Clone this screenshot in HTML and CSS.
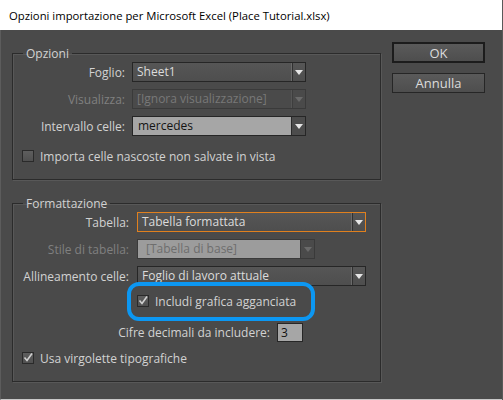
FILE: index.html
```
<!DOCTYPE html>
<html lang="it">
<head>
<meta charset="utf-8">
<title>Opzioni importazione</title>
<link rel="stylesheet" href="styles.css">
</head>
<body>
<div class="window">
  <div class="titlebar">Opzioni importazione per Microsoft Excel (Place Tutorial.xlsx)</div>
  <div class="client">
    <div class="groups">
      <fieldset class="group g1">
        <legend>Opzioni</legend>
        <div class="row r-first">
          <span class="lbl">Foglio:</span>
          <div class="select w-foglio"><span class="val">Sheet1</span><span class="btn"><span class="tri"></span></span></div>
        </div>
        <div class="row r-next">
          <span class="lbl dis">Visualizza:</span>
          <div class="select w-foglio disabled"><span class="val">[Ignora visualizzazione]</span><span class="btn"><span class="tri"></span></span></div>
        </div>
        <div class="row r-next">
          <span class="lbl">Intervallo celle:</span>
          <div class="select w-foglio field"><span class="val">mercedes</span><span class="btn plain"><span class="tri"></span></span></div>
        </div>
        <div class="row r-check1">
          <span class="cb"></span>
          <span class="cbtext">Importa celle nascoste non salvate in vista</span>
        </div>
      </fieldset>

      <fieldset class="group g2">
        <legend>Formattazione</legend>
        <div class="row r-first">
          <span class="lbl">Tabella:</span>
          <div class="select w-tab focused"><span class="val">Tabella formattata</span><span class="btn"><span class="tri"></span></span></div>
        </div>
        <div class="row r-next">
          <span class="lbl dis">Stile di tabella:</span>
          <div class="select w-stile disfield"><span class="val">[Tabella di base]</span><span class="btn plain"><span class="tri"></span></span></div>
        </div>
        <div class="row r-next">
          <span class="lbl">Allineamento celle:</span>
          <div class="select w-tab"><span class="val">Foglio di lavoro attuale</span><span class="btn"><span class="tri"></span></span></div>
        </div>
        <div class="row r-incl">
          <span class="cb checked"><svg viewBox="0 0 12 12" width="12" height="12"><path d="M2.5 5.5 L5 8.5 L10 1.5" fill="none" stroke="#d0d0d0" stroke-width="1.6"/></svg></span>
          <span class="cbtext">Includi grafica agganciata</span>
          <span class="highlight"></span>
        </div>
        <div class="row r-cifre">
          <span class="lbl-cifre">Cifre decimali da includere:</span>
          <span class="numfield">3</span>
        </div>
        <div class="row r-usa">
          <span class="cb checked"><svg viewBox="0 0 12 12" width="12" height="12"><path d="M2.5 5.5 L5 8.5 L10 1.5" fill="none" stroke="#d0d0d0" stroke-width="1.6"/></svg></span>
          <span class="cbtext">Usa virgolette tipografiche</span>
        </div>
      </fieldset>
    </div>
    <div class="buttons">
      <div class="button default">OK</div>
      <div class="button">Annulla</div>
    </div>
  </div>
</div>
</body>
</html>
```

FILE: styles.css
```
* { box-sizing: border-box; }
html, body { margin: 0; padding: 0; }
body {
  width: 503px;
  height: 400px;
  overflow: hidden;
  background: #d8d8d8;
  font-family: "Open Sans", "Noto Sans", "DejaVu Sans", sans-serif;
  font-size: 12px;
  color: #d2d2d2;
}
.window {
  width: 503px;
  height: 400px;
  display: flex;
  flex-direction: column;
  border-right: 1px solid #595959;
}
.titlebar {
  height: 30px;
  flex: none;
  background: #ffffff;
  color: #000;
  padding-left: 9px;
  padding-top: 1px;
  display: flex;
  align-items: center;
  white-space: nowrap;
  font-size: 11.3px;
}
.client {
  flex: 1;
  background: #4a4a4a;
  border-left: 1px solid #5c5c5c;
  border-bottom: 1px solid #c8c8c8;
  display: flex;
  align-items: flex-start;
  padding: 16px 0 0 11px;
}
.groups {
  width: 369px;
  display: flex;
  flex-direction: column;
}
.group {
  margin: 0;
  padding: 0;
  min-width: 0;
  border: 1px solid #2b2b2b;
  box-shadow: 1px 1px 0 #585858, inset 1px 1px 0 #585858;
}
.group legend {
  margin-left: 10px;
  padding: 0 3px;
  line-height: 15px;
  height: 15px;
  color: #d2d2d2;
}
.g1 { height: 134px; margin-bottom: 16px; }
.g2 { height: 186px; }
.row {
  display: flex;
  align-items: center;
  height: 20px;
  white-space: nowrap;
}
.r-first { margin-top: 1px; }
.r-next { margin-top: 7px; }
.r-check1 { margin-top: 10px; padding-left: 9px; }
.r-incl { margin-top: 5px; padding-left: 124px; position: relative; }
.r-cifre { margin-top: 11px; }
.r-usa { margin-top: 6px; padding-left: 9px; }

.g1 .lbl { width: 112px; margin-right: 7px; text-align: right; }
.g2 .lbl { width: 116px; margin-right: 8px; text-align: right; }
.lbl.dis { color: #808080; }

.select {
  height: 20px;
  display: flex;
  border: 1px solid #262626;
  background: linear-gradient(#565656, #4e4e4e);
  color: #dcdcdc;
}
.w-foglio { width: 174px; }
.w-tab { width: 229px; }
.w-stile { width: 178px; }
.select .val {
  flex: 1;
  padding-left: 4px;
  line-height: 18px;
  overflow: hidden;
}
.select .btn {
  width: 14px;
  flex: none;
  display: flex;
  align-items: center;
  justify-content: center;
  border-left: 1px solid #6a6a6a;
  box-shadow: inset 1px 0 0 #303030;
  padding-left: 1px;
}
.select .btn.plain {
  border-left: 1px solid #2a2a2a;
  box-shadow: none;
  background: #4c4c4c;
  padding-left: 0;
}
.tri {
  width: 0;
  height: 0;
  border-left: 4px solid transparent;
  border-right: 4px solid transparent;
  border-top: 5px solid #e6e6e6;
}
.select.focused { border-color: #e0801e; }
.select.disabled { border-color: #3a3a3a; background: #4a4a4a; color: #787878; }
.select.disabled .btn { border-left-color: #555; box-shadow: inset 1px 0 0 #3e3e3e; }
.select.disabled .tri { border-top-color: #6a6a6a; }
.select.field .val { background: #a6a6a6; color: #141414; padding-left: 5px; }
.select.disfield { border-color: #3a3a3a; }
.select.disfield .val { background: #9c9c9c; color: #6e6e6e; padding-left: 8px; }
.select.disfield .btn { border-left-color: #3a3a3a; background: #4a4a4a; }
.select.disfield .tri { border-top-color: #6a6a6a; }

.cb {
  width: 12px;
  height: 12px;
  flex: none;
  border: 1px solid #2a2a2a;
  background: linear-gradient(#5e5e5e, #505050);
  margin-right: 6px;
  display: flex;
  align-items: center;
  justify-content: center;
}
.cb svg { display: block; flex: none; }
.cbtext { color: #d2d2d2; }

.highlight {
  position: absolute;
  left: 114px;
  top: -9px;
  width: 188px;
  height: 39px;
  border: 4px solid #0c97f2;
  border-radius: 12px;
}

.lbl-cifre { width: 257px; text-align: right; margin-right: 7px; }
.numfield {
  width: 26px;
  height: 19px;
  border: 1px solid #262626;
  background: #a6a6a6;
  color: #111;
  padding-left: 3px;
  line-height: 17px;
}

.buttons {
  margin-left: 11px;
  margin-top: -4px;
  display: flex;
  flex-direction: column;
  gap: 10px;
}
.button {
  width: 93px;
  height: 20px;
  border: 1px solid #262626;
  background: linear-gradient(#5a5a5a, #4e4e4e);
  color: #dcdcdc;
  display: flex;
  align-items: center;
  justify-content: center;
  font-size: 13px;
}
.button.default {
  height: 21px;
  border: 2px solid #1c1c1c;
}
```
